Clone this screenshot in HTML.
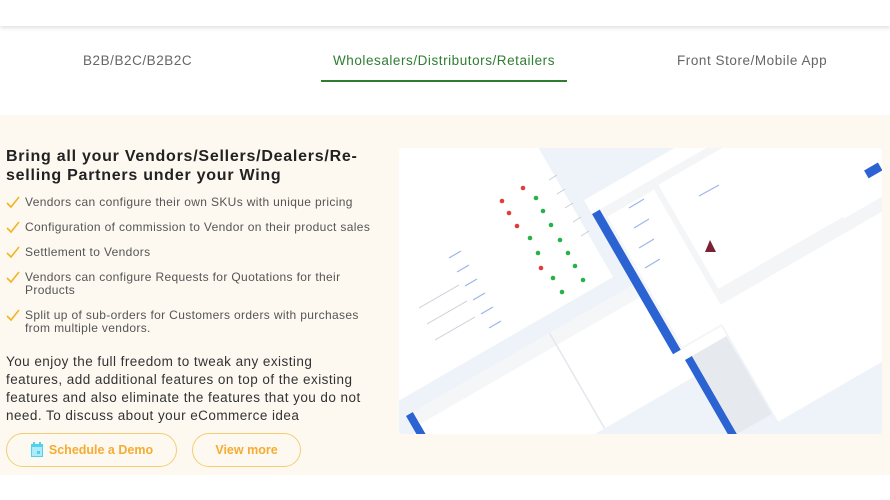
<!DOCTYPE html>
<html><head><style>
*{margin:0;padding:0;box-sizing:border-box}
body{width:890px;height:500px;background:#fff;font-family:"Liberation Sans",sans-serif;position:relative;overflow:hidden}
.top{position:absolute;left:0;top:0;width:890px;height:26px;background:#fff;box-shadow:0 2px 4px rgba(0,0,0,.12)}
.tab{position:absolute;top:53px;font-size:13.5px;color:#666;letter-spacing:.55px}
.band{position:absolute;left:0;top:115px;width:890px;height:360px;background:#fdf9f1}
h2{position:absolute;left:6px;top:147px;font-size:16px;line-height:19px;color:#222;font-weight:bold;white-space:nowrap;letter-spacing:.75px}
ul{position:absolute;left:6px;top:196px;list-style:none;font-size:12px;color:#555;line-height:13px;white-space:nowrap;letter-spacing:.35px}
li{position:relative;padding-left:19px;margin-bottom:12px}
li svg{position:absolute;left:0;top:0}
p{position:absolute;left:6px;top:353px;font-size:13.5px;line-height:18px;color:#333;white-space:nowrap;letter-spacing:.45px}
.btn{position:absolute;top:433px;height:34px;border:1.5px solid #f2cd75;border-radius:17px;color:#f5ac30;font-weight:bold;font-size:12.5px;display:flex;align-items:center;justify-content:center}
</style></head><body>
<div class="top"></div>
<div class="tab" style="left:83px">B2B/B2C/B2B2C</div>
<div class="tab" style="left:333px;color:#2e7d32">Wholesalers/Distributors/Retailers</div>
<div style="position:absolute;left:321px;top:80px;width:246px;height:2px;background:#2e7d32"></div>
<div class="tab" style="left:677px">Front Store/Mobile App</div>
<div class="band"></div>
<h2>Bring all your Vendors/Sellers/Dealers/Re-<br>selling Partners under your Wing</h2>
<ul>
<li><svg width="14" height="13"><path d="M1 7l4 4 8-10" stroke="#f5b324" stroke-width="1.6" fill="none"/></svg>Vendors can configure their own SKUs with unique pricing</li>
<li><svg width="14" height="13"><path d="M1 7l4 4 8-10" stroke="#f5b324" stroke-width="1.6" fill="none"/></svg>Configuration of commission to Vendor on their product sales</li>
<li><svg width="14" height="13"><path d="M1 7l4 4 8-10" stroke="#f5b324" stroke-width="1.6" fill="none"/></svg>Settlement to Vendors</li>
<li><svg width="14" height="13"><path d="M1 7l4 4 8-10" stroke="#f5b324" stroke-width="1.6" fill="none"/></svg>Vendors can configure Requests for Quotations for their<br>Products</li>
<li><svg width="14" height="13"><path d="M1 7l4 4 8-10" stroke="#f5b324" stroke-width="1.6" fill="none"/></svg>Split up of sub-orders for Customers orders with purchases<br>from multiple vendors.</li>
</ul>
<p>You enjoy the full freedom to tweak any existing<br>features, add additional features on top of the existing<br>features and also eliminate the features that you do not<br>need. To discuss about your eCommerce idea</p>
<div class="btn" style="left:6px;width:171px"><svg width="14" height="16" style="margin-right:5px"><rect x="1" y="2" width="12" height="13" fill="#4fd2ee"/><rect x="3" y="0" width="2" height="4" fill="#4fd2ee"/><rect x="9" y="0" width="2" height="4" fill="#4fd2ee"/><rect x="2" y="5" width="10" height="9" fill="#aeeaf7"/><rect x="7" y="9" width="3" height="3" fill="#4fd2ee"/></svg>Schedule a Demo</div>
<div class="btn" style="left:192px;width:109px">View more</div>
<svg style="position:absolute;left:399px;top:148px" width="483" height="286" viewBox="0 0 483 286">
<defs><clipPath id="c"><rect width="483" height="286" rx="3"/></clipPath></defs>
<g clip-path="url(#c)">
<rect width="483" height="286" fill="#eef3f9"/>
<g transform="translate(214,129) rotate(-30)"><rect x="-420" y="-320" width="420" height="320" fill="#fff"/><rect x="-420" y="-320" width="420" height="8" fill="#f3f5f8"/></g>
<g transform="translate(7,268) rotate(-30)"><rect x="0" y="0" width="8" height="80" fill="#2b63d3"/><rect x="8" y="0" width="310" height="110" fill="#fff"/><rect x="8" y="0" width="310" height="14" fill="#f5f6f8"/><rect x="165" y="0" width="1.5" height="110" fill="#e3e7ee"/></g>
<g transform="translate(193,66) rotate(-30)"><rect x="0" y="0" width="9" height="162" fill="#2b63d3"/><rect x="9" y="0" width="330" height="162" fill="#f4f5f7"/><rect x="72" y="8" width="250" height="120" fill="#fff"/><rect x="12" y="10" width="54" height="150" fill="#fff"/><rect x="0" y="-16" width="340" height="16" fill="#fff"/></g>
<g transform="translate(410,10) rotate(-30)"><rect x="0" y="-40" width="120" height="110" fill="#fff"/></g>
<rect x="466" y="18" width="16" height="9" fill="#2b63d3" transform="rotate(-30 474 22)"/>
<g transform="translate(286,212) rotate(-30)"><rect x="0" y="0" width="8" height="90" fill="#2b63d3"/><rect x="8" y="0" width="40" height="90" fill="#e6e9ee"/><rect x="50" y="-30" width="220" height="130" fill="#fff"/></g>
<g fill="#e23b3b"><circle cx="124" cy="40" r="2.3"/><circle cx="103" cy="53" r="2.3"/><circle cx="110" cy="65" r="2.3"/><circle cx="118" cy="78" r="2.3"/><circle cx="142" cy="120" r="2.3"/></g>
<g fill="#25b24a"><circle cx="137" cy="50" r="2.3"/><circle cx="144" cy="63" r="2.3"/><circle cx="152" cy="77" r="2.3"/><circle cx="131" cy="90" r="2.3"/><circle cx="161" cy="92" r="2.3"/><circle cx="139" cy="105" r="2.3"/><circle cx="169" cy="105" r="2.3"/><circle cx="176" cy="118" r="2.3"/><circle cx="154" cy="130" r="2.3"/><circle cx="184" cy="132" r="2.3"/><circle cx="163" cy="144" r="2.3"/></g>
<g stroke="#9db5e8" stroke-width="1.2">
<path d="M50 110l12-7M58 124l12-7M66 138l12-7M74 152l12-7M82 166l12-7M90 180l12-7"/>
<path d="M300 48l20-11M230 60l15-9M235 80l15-9M240 100l15-9M246 120l15-9"/>
</g>
<g stroke="#c9ced6" stroke-width="1"><path d="M150 32l8-5M158 46l8-5M166 60l8-5M174 74l8-5M182 88l8-5M20 160l40-23M28 176l40-23M36 192l40-23"/></g>
<path d="M306 104l5-12 6 12z" fill="#7a2233"/>
</g>
</svg>
</body></html>
